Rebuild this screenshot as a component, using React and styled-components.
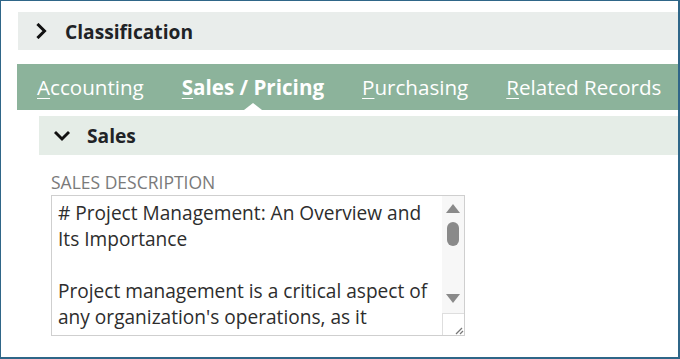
import React from "react";
import styled, { createGlobalStyle } from "styled-components";

const Global = createGlobalStyle`
  html, body { margin: 0; padding: 0; background: #fff; }
  body { font-family: "Open Sans", "Noto Sans", sans-serif; }
`;

const Frame = styled.div`
  box-sizing: border-box;
  width: 680px;
  height: 359px;
  border: 1px solid #2f6688;
  border-right-width: 2px;
  border-bottom-width: 2px;
  padding: 11px 0 0 16px;
  overflow: hidden;
`;

const SectionBar = styled.div`
  display: flex;
  align-items: center;
  gap: ${(p) => p.$gap}px;
  height: ${(p) => p.$height}px;
  margin-left: ${(p) => p.$indent}px;
  margin-top: ${(p) => p.$top}px;
  padding-left: ${(p) => p.$pad}px;
  background: ${(p) => p.$bg};
  color: #1f2326;
  font-weight: 700;
  font-size: 19.2px;
`;

const TabBar = styled.div`
  display: flex;
  align-items: center;
  height: 46px;
  margin-top: 14px;
  padding-left: 1px;
  background: #8cb39b;
`;

const Tab = styled.div`
  position: relative;
  height: 100%;
  display: flex;
  align-items: center;
  padding: 0 19px;
  font-size: 20.6px;
  font-weight: ${(p) => (p.$active ? 700 : 400)};
  color: #fff;
  white-space: nowrap;
  u { text-decoration-thickness: 1px; text-underline-offset: 3px; }
`;

const Notch = styled.span`
  position: absolute;
  left: 50%;
  bottom: 0;
  transform: translateX(-50%);
  width: 0;
  height: 0;
  border-left: 9px solid transparent;
  border-right: 9px solid transparent;
  border-bottom: 7px solid #fff;
`;

const Field = styled.div`
  margin: 17px 0 0 34px;
  display: flex;
  flex-direction: column;
  gap: 3px;
`;

const Label = styled.div`
  font-size: 17.5px;
  color: #7a7a7a;
  line-height: 20px;
`;

const TextBox = styled.div`
  box-sizing: border-box;
  width: 414px;
  height: 141px;
  border: 1px solid #cfcfcf;
  display: flex;
  overflow: hidden;
`;

const TextContent = styled.div`
  flex: 1;
  padding: 4px 6px;
  font-size: 19.1px;
  line-height: 26px;
  color: #2d2d2d;
  white-space: pre-wrap;
`;

const ScrollCol = styled.div`
  width: 22px;
  display: flex;
  flex-direction: column;
  align-items: center;
  background: #f7f7f7;
`;

const Arrow = styled.div`
  width: 0;
  height: 0;
  border-left: 7px solid transparent;
  border-right: 7px solid transparent;
  ${(p) =>
    p.$up
      ? "border-bottom: 9px solid #8a8a8a;"
      : "border-top: 9px solid #8a8a8a;"}
  margin-top: ${(p) => p.$top}px;
  margin-bottom: ${(p) => p.$bottom || 0}px;
`;

const Thumb = styled.div`
  width: 12px;
  height: 24px;
  border-radius: 6px;
  background: #8a8a8a;
  margin-top: 9px;
`;

const Spacer = styled.div`
  flex: 1;
`;

const Grip = styled.div`
  box-sizing: border-box;
  width: 22px;
  height: 22px;
  border-top: 1px solid #dedede;
  border-left: 1px solid #dedede;
  background: #fff;
  display: flex;
  align-items: flex-end;
  justify-content: flex-end;
`;

const Chevron = ({ dir }) => (
  <svg width="16" height="16" viewBox="0 0 16 16">
    <polyline
      points={dir === "down" ? "2,5 8,11 14,5" : "4.5,2 10.5,8 4.5,14"}
      fill="none"
      stroke="#111"
      strokeWidth="3"
      strokeLinecap="square"
    />
  </svg>
);

const text = `# Project Management: An Overview and Its Importance

Project management is a critical aspect of any organization's operations, as it`;

export default function App() {
  return (
    <>
      <Global />
      <Frame>
        <SectionBar $height={38} $indent={1} $top={0} $pad={16} $gap={15} $bg="#e9edeb">
          <Chevron dir="right" />
          <span>Classification</span>
        </SectionBar>
        <TabBar>
          <Tab><span><u>A</u>ccounting</span></Tab>
          <Tab $active><span><u>S</u>ales / Pricing</span><Notch /></Tab>
          <Tab><span><u>P</u>urchasing</span></Tab>
          <Tab><span><u>R</u>elated Records</span></Tab>
        </TabBar>
        <SectionBar $height={39} $indent={22} $top={6} $pad={15} $gap={17} $bg="#e5ede7">
          <Chevron dir="down" />
          <span>Sales</span>
        </SectionBar>
        <Field>
          <Label>SALES DESCRIPTION</Label>
          <TextBox>
            <TextContent>{text}</TextContent>
            <ScrollCol>
              <Arrow $up $top={8} />
              <Thumb />
              <Spacer />
              <Arrow $top={0} $bottom={10} />
              <Grip>
                <svg width="10" height="10" viewBox="0 0 10 10">
                  <line x1="2" y1="9" x2="8" y2="3" stroke="#777" strokeWidth="1.2" />
                  <line x1="6" y1="9" x2="9" y2="6" stroke="#777" strokeWidth="1.2" />
                </svg>
              </Grip>
            </ScrollCol>
          </TextBox>
        </Field>
      </Frame>
    </>
  );
}
